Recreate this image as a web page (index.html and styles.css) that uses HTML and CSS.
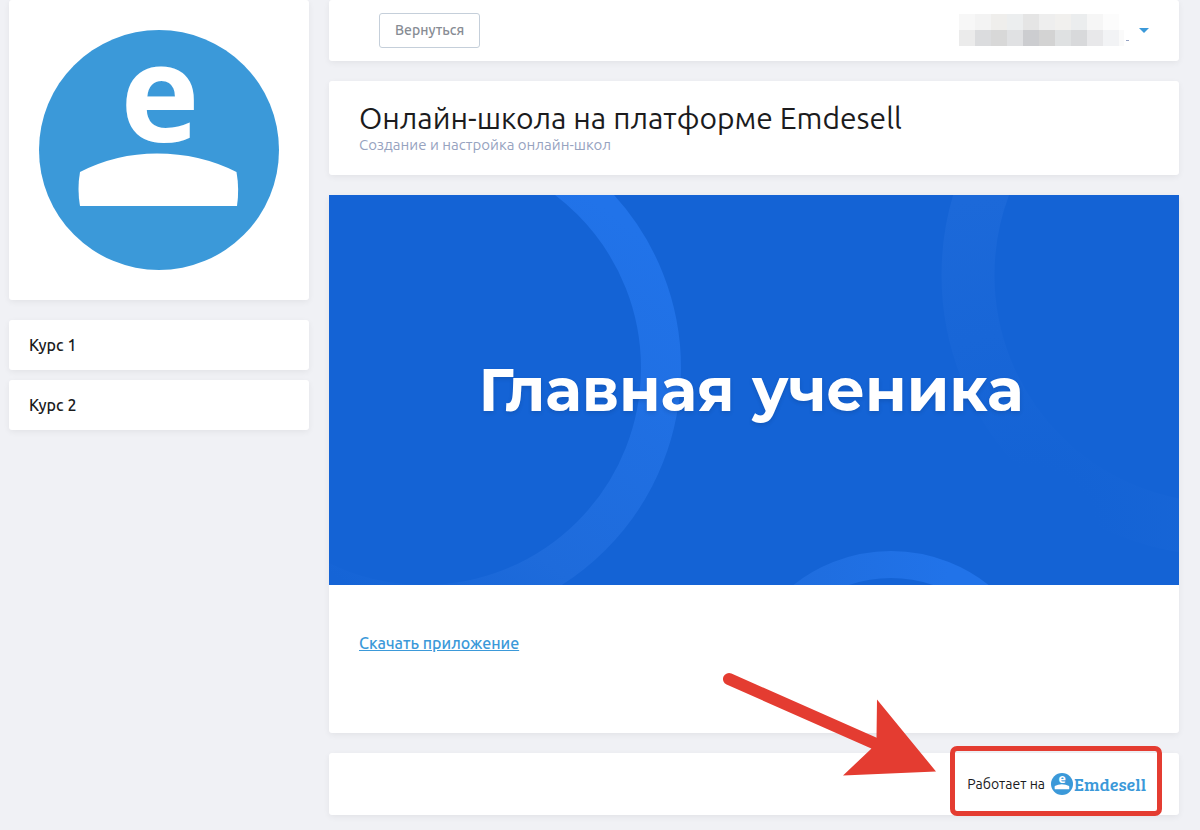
FILE: index.html
```html
<!DOCTYPE html>
<html lang="ru">
<head>
<meta charset="utf-8">
<meta name="viewport" content="width=device-width, initial-scale=1">
<title>Онлайн-школа на платформе Emdesell</title>
<link rel="stylesheet" href="styles.css">
</head>
<body>
<div class="page">
  <aside class="sidebar">
    <div class="card school-logo">
      <svg class="school-logo-image" viewBox="0 0 240 240" role="img" aria-label="Emdesell">
        <circle cx="120" cy="120" r="120" fill="#3b99d9"/>
        <text class="logo-letter" x="121" y="112" text-anchor="middle">e</text>
        <path d="M41 142Q77 123.500 118 123.500Q161 123.500 197.500 142Q200.500 159 198 176H41Q38 159 41 142Z" fill="#fff"/>
      </svg>
    </div>
    <nav class="courses">
      <a class="card course" href="#course-1">Курс 1</a>
      <a class="card course" href="#course-2">Курс 2</a>
    </nav>
  </aside>

  <div class="content">
    <header class="card topbar">
      <button class="back" type="button">Вернуться</button>
      <button class="user-menu" type="button" aria-label="Меню пользователя">
        <svg class="user-name" width="170" height="33" viewBox="0 0 170 33" shape-rendering="crispEdges" aria-hidden="true">
          <path fill="#f7f7f7" d="M0 0h16v16H0z"/><path fill="#f3f3f3" d="M16 0h16v16H16z"/>
          <path fill="#efeeec" d="M32 0h16v16H32z"/><path fill="#eceeef" d="M48 0h16v16H48z"/>
          <path fill="#e5e5e5" d="M64 0h16v16H64z"/><path fill="#eee" d="M80 0h16v16H80z"/>
          <path fill="#f1f0ee" d="M96 0h16v16H96z"/><path fill="#ebedee" d="M112 0h16v16h-16z"/>
          <path fill="#f6f6f6" d="M128 0h16v16h-16z"/><path fill="#fcfcfc" d="M144 0h16v16h-16z"/>
          <path fill="#ebebeb" d="M0 16h16v16H0z"/><path fill="#dbdcde" d="M16 16h16v16H16z"/>
          <path fill="#d8d8d8" d="M32 16h16v16H32z"/><path fill="#e0e1e3" d="M48 16h16v16H48z"/>
          <path fill="#cccdd0" d="M64 16h16v16H64z"/><path fill="#d3d3d3" d="M80 16h16v16H80z"/>
          <path fill="#dfe1e2" d="M96 16h16v16H96z"/><path fill="#d8d9db" d="M112 16h16v16h-16z"/>
          <path fill="#e8e8ea" d="M128 16h16v16h-16z"/><path fill="#f2f3f5" d="M144 16h16v16h-16z"/>
          <path fill="#fafafa" d="M160 16h5v16h-5z"/><path fill="#95a2c3" d="M167 26h3v1h-3z"/>
        </svg>
        <svg class="caret" width="10" height="5" viewBox="0 0 10 5" aria-hidden="true"><path d="M0 0h10L5 5z" fill="#3b99d9"/></svg>
      </button>
    </header>

    <section class="card heading">
      <h1 class="title">Онлайн-школа на платформе Emdesell</h1>
      <p class="subtitle">Создание и настройка онлайн-школ</p>
    </section>

    <main class="card body">
      <div class="banner">
        <svg class="banner-art" viewBox="0 0 850 390" preserveAspectRatio="xMidYMid slice" aria-hidden="true">
          <defs>
            <linearGradient id="ring-left" gradientUnits="userSpaceOnUse" x1="300" y1="30" x2="30" y2="400">
              <stop offset="0" stop-color="#2173e9"/>
              <stop offset=".7" stop-color="#1e6bdb"/>
              <stop offset="1" stop-color="#1564d6"/>
            </linearGradient>
            <radialGradient id="ring-right" gradientUnits="userSpaceOnUse" cx="700" cy="340" r="340">
              <stop offset="0" stop-color="#1463d5"/>
              <stop offset=".2" stop-color="#1463d5"/>
              <stop offset="1" stop-color="#1c69d9"/>
            </radialGradient>
            <linearGradient id="ring-bottom" x1="0" y1="0" x2="1" y2="0">
              <stop offset="0" stop-color="#1e6bdb"/>
              <stop offset=".7" stop-color="#2173e9"/>
            </linearGradient>
          </defs>
          <g fill="none">
            <circle cx="95" cy="173" r="237" stroke="url(#ring-left)" stroke-width="40"/>
            <circle cx="893" cy="80" r="254" stroke="url(#ring-right)" stroke-width="53"/>
            <circle cx="562" cy="513" r="143.500" stroke="url(#ring-bottom)" stroke-width="27"/>
          </g>
        </svg>
        <h2 class="banner-title">Главная ученика</h2>
      </div>
      <div class="body-links">
        <a class="download" href="#app">Скачать приложение</a>
      </div>
    </main>

    <footer class="card footer">
      <div class="powered">
        <span>Работает на</span>
        <a class="brand" href="#emdesell">
          <svg class="brand-icon" viewBox="0 0 240 240" aria-hidden="true">
            <circle cx="120" cy="120" r="120" fill="#3b99d9"/>
            <text class="logo-letter" x="121" y="112" text-anchor="middle">e</text>
            <path d="M41 142Q77 123.500 118 123.500Q161 123.500 197.500 142Q200.500 159 198 176H41Q38 159 41 142Z" fill="#fff"/>
          </svg>
          <span>Emdesell</span>
        </a>
      </div>
      <svg class="pointer" width="214" height="104" viewBox="0 0 214 104" aria-hidden="true">
        <path d="M7 7L154 72" stroke="#e43c31" stroke-width="12" stroke-linecap="round"/>
        <path d="M155 27.500L214 99.500L121 103.500L149 77L154.500 66Z" fill="#e43c31"/>
      </svg>
    </footer>
  </div>
</div>
</body>
</html>
```
FILE: styles.css
```css
* {
  box-sizing: border-box;
}

body {
  margin: 0;
  background: #f0f1f5;
  color: #1b1b1d;
  font-family: Ubuntu, "Noto Sans", sans-serif;
  font-size: 16px;
  line-height: 20px;
}

h1, h2, p {
  margin: 0;
}

button {
  font: inherit;
  cursor: pointer;
}

.page {
  display: flex;
  align-items: flex-start;
  gap: 20px;
  padding: 0 21px 15px 9px;
}

.card {
  background: #fff;
  border-radius: 3px;
  box-shadow: 0 2px 6px rgba(0, 0, 0, .06);
}

.sidebar {
  flex: 0 0 300px;
  display: flex;
  flex-direction: column;
  gap: 20px;
}

.school-logo {
  padding: 30px;
}

.school-logo-image {
  display: block;
  width: 100%;
  overflow: visible;
}

.logo-letter {
  fill: #fff;
  font-family: "Noto Sans", sans-serif;
  font-size: 134px;
  font-weight: 700;
}

.courses {
  display: flex;
  flex-direction: column;
  gap: 10px;
}

.course {
  padding: 15px 20px;
  color: inherit;
  font-weight: 500;
  text-decoration: none;
}

.content {
  flex: 1;
  min-width: 0;
  display: flex;
  flex-direction: column;
  gap: 20px;
}

.topbar {
  display: flex;
  justify-content: space-between;
  align-items: center;
  padding: 13px 30px 13px 50px;
}

.back {
  padding: 6px 15px 7px;
  border: 1px solid #c5cfda;
  border-radius: 3px;
  background: #fff;
  color: #878c94;
  font-size: 14px;
  font-weight: 500;
}

.user-menu {
  display: flex;
  align-items: center;
  gap: 10px;
  padding: 0;
  border: 0;
  background: none;
}

.heading {
  padding: 20px 30px;
}

.title {
  font-size: 30px;
  font-weight: 400;
  line-height: 34px;
}

.subtitle {
  color: #97a3bf;
  font-size: 15px;
}

.banner {
  display: grid;
  place-items: center;
  background: #1463d5;
}

.banner-art,
.banner-title {
  grid-area: 1 / 1;
}

.banner-art {
  display: block;
  width: 100%;
}

.banner-title {
  padding-right: 6px;
  color: #fff;
  font-family: Montserrat, Inter, sans-serif;
  font-size: 60px;
  font-weight: 700;
  line-height: 72px;
  text-shadow: 0 2px 4px rgba(0, 0, 0, .12);
}

.body-links {
  padding: 48px 30px 80px;
}

.download {
  color: #3b99d9;
  font-weight: 500;
}

.footer {
  position: relative;
  display: flex;
  justify-content: flex-end;
  padding: 20px 33px;
}

.powered {
  position: relative;
  display: flex;
  align-items: center;
  gap: 6px;
  font-size: 14px;
}

.powered::after {
  content: "";
  position: absolute;
  inset: -27px -16px -21px -17px;
  border: 5px solid #e43c31;
  border-radius: 7px;
  pointer-events: none;
}

.brand {
  display: flex;
  align-items: center;
  gap: 1px;
  color: #3b99d9;
  font-family: "Bree Serif", "DejaVu Serif Condensed", "DejaVu Serif", serif;
  font-size: 18px;
  font-weight: 400;
  text-decoration: none;
}

.brand-icon {
  width: 22px;
  height: 22px;
  overflow: visible;
}

.pointer {
  position: absolute;
  right: 243px;
  bottom: 39px;
  pointer-events: none;
}
```
